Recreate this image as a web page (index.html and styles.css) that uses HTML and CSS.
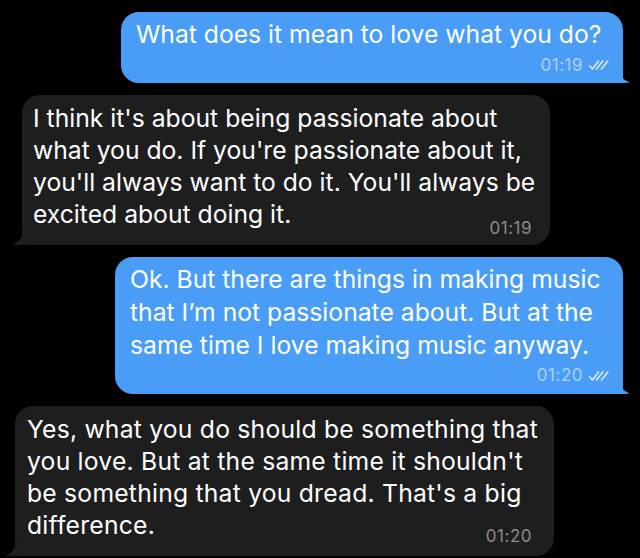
FILE: index.html
```html
<!DOCTYPE html>
<html>
<head>
<meta charset="utf-8">
<link rel="stylesheet" href="styles.css">
</head>
<body>
<div class="chat">
  <div class="bubble out b1">
    <div class="text">What does it mean to love what you do?</div>
    <div class="meta"><span class="time">01:19</span><svg class="checks" viewBox="0 0 22 12" width="22" height="12"><path d="M1.5 6.8 L4.5 10 L10.5 2" /><path d="M8.5 10 L14.8 2" /><path d="M13.5 10 L19.8 2" /></svg></div>
    <svg class="tail tail-r" viewBox="0 0 14 20" width="14" height="20"><path d="M0 0 C0 10 3 16 12 19.5 C8 20 3 20 0 20 Z" /></svg>
  </div>

  <div class="bubble in b2">
    <div class="text">I think it's about being passionate about<br>what you do. If you're passionate about it,<br>you'll always want to do it. You'll always be</div>
    <div class="last"><span class="text">excited about doing it.</span><span class="time">01:19</span></div>
    <svg class="tail tail-l" viewBox="0 0 14 20" width="14" height="20"><path d="M14 0 C14 10 11 16 2 19.5 C6 20 11 20 14 20 Z" /></svg>
  </div>

  <div class="bubble out b3">
    <div class="text">Ok. But there are things in making music<br>that I’m not passionate about. But at the<br>same time I love making music anyway.</div>
    <div class="meta"><span class="time">01:20</span><svg class="checks" viewBox="0 0 22 12" width="22" height="12"><path d="M1.5 6.8 L4.5 10 L10.5 2" /><path d="M8.5 10 L14.8 2" /><path d="M13.5 10 L19.8 2" /></svg></div>
    <svg class="tail tail-r" viewBox="0 0 14 20" width="14" height="20"><path d="M0 0 C0 10 3 16 12 19.5 C8 20 3 20 0 20 Z" /></svg>
  </div>

  <div class="bubble in b4">
    <div class="text">Yes, what you do should be something that<br>you love. But at the same time it shouldn't<br>be something that you dread. That's a big</div>
    <div class="last"><span class="text">difference.</span><span class="time">01:20</span></div>
    <svg class="tail tail-l" viewBox="0 0 14 20" width="14" height="20"><path d="M14 0 C14 10 11 16 2 19.5 C6 20 11 20 14 20 Z" /></svg>
  </div>
</div>
</body>
</html>
```

FILE: styles.css
```css
html, body {
  margin: 0;
  padding: 0;
  background: #000;
}

body {
  width: 640px;
  height: 558px;
  overflow: hidden;
  font-family: Inter, "Noto Sans", "Liberation Sans", sans-serif;
  color: #fff;
}

.chat {
  display: flex;
  flex-direction: column;
  gap: 12px;
  padding-top: 12px;
}

.bubble {
  position: relative;
  box-sizing: border-box;
  border-radius: 18px;
}

.bubble .text {
  font-size: 24.7px;
  white-space: nowrap;
}

.out {
  align-self: flex-end;
  margin-right: 17px;
  background: #4a9df6;
  border-bottom-right-radius: 4px;
  padding: 6px 13px 9px 15px;
}

.out .text {
  line-height: 33px;
}

.in {
  align-self: flex-start;
  background: #1e1e1f;
  border-bottom-left-radius: 4px;
  padding: 6.5px 18px 15px 11px;
}

.in .text {
  line-height: 32px;
}

.b1 { width: 502px; }
.b2 { width: 528px; margin-left: 22px; }
.b3 { width: 508px; }
.b4 { width: 539px; margin-left: 15px; padding: 7.5px 22px 15px 12px; }

.b4 .text {
  letter-spacing: 0.22px;
}

.meta {
  display: flex;
  justify-content: flex-end;
  align-items: center;
  gap: 5px;
  margin-top: 5px;
  height: 18px;
}

.time {
  font-size: 17px;
  line-height: 17px;
  letter-spacing: 0.5px;
}

.out .time {
  color: #acd1fa;
}

.in .time {
  color: #8b8b90;
  margin-bottom: -7.5px;
}

.b4 .time {
  margin-bottom: -3.5px;
}

.checks {
  fill: none;
  stroke: #dcecfd;
  stroke-width: 1.6;
  stroke-linecap: round;
  stroke-linejoin: round;
}

.last {
  display: flex;
  justify-content: space-between;
  align-items: flex-end;
}

.tail {
  position: absolute;
  bottom: 0;
}

.tail-r {
  right: -9px;
  fill: #4a9df6;
}

.tail-l {
  left: -12px;
  fill: #1e1e1f;
}
```
